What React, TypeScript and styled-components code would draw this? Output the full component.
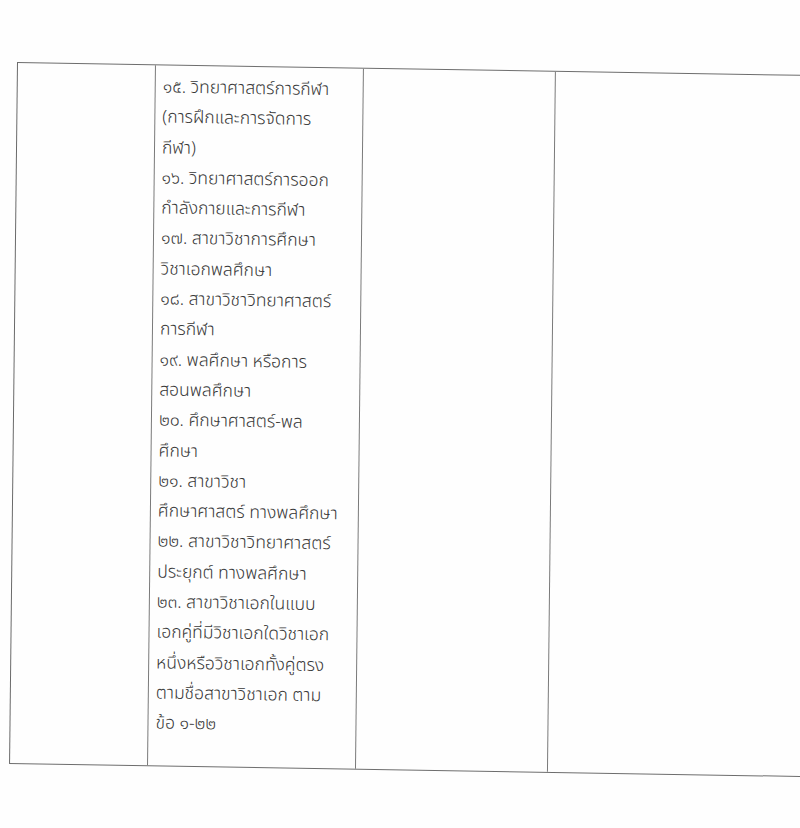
import React from "react";
import styled, { createGlobalStyle } from "styled-components";

const Global = createGlobalStyle`
  html, body {
    margin: 0;
    padding: 0;
    background: #ffffff;
  }
  body {
    font-family: "Noto Sans Thai", "Noto Sans", "DejaVu Sans", sans-serif;
  }
`;

const Page = styled.div`
  width: 800px;
  height: 828px;
  overflow: hidden;
  background: #fefefe;
  padding: 62px 0 0 17px;
  box-sizing: border-box;
`;

const Table = styled.div`
  display: grid;
  width: 840px;
  grid-template-columns: 138px 208px 192px 302px;
  height: 700px;
  border-top: 1.5px solid #6d6d6d;
  border-bottom: 1.5px solid #6d6d6d;
  transform-origin: 0 0;
  transform: skewX(-0.65deg) skewY(0.94deg);
`;

const Cell = styled.div<{ $first?: boolean }>`
  border-left: 1.2px solid ${(p) => (p.$first ? "#6a6a6a" : "#7a7a7a")};
  box-sizing: border-box;
  padding: 7px 0 0 7px;
`;

const Line = styled.div`
  white-space: nowrap;
  font-size: 17.5px;
  font-weight: 300;
  line-height: 30.3px;
  color: #383838;
`;

const lines = [
  "๑๕. วิทยาศาสตร์การกีฬา",
  "(การฝึกและการจัดการ",
  "กีฬา)",
  "๑๖. วิทยาศาสตร์การออก",
  "กำลังกายและการกีฬา",
  "๑๗. สาขาวิชาการศึกษา",
  "วิชาเอกพลศึกษา",
  "๑๘. สาขาวิชาวิทยาศาสตร์",
  "การกีฬา",
  "๑๙. พลศึกษา หรือการ",
  "สอนพลศึกษา",
  "๒๐. ศึกษาศาสตร์-พล",
  "ศึกษา",
  "๒๑. สาขาวิชา",
  "ศึกษาศาสตร์ ทางพลศึกษา",
  "๒๒. สาขาวิชาวิทยาศาสตร์",
  "ประยุกต์ ทางพลศึกษา",
  "๒๓. สาขาวิชาเอกในแบบ",
  "เอกคู่ที่มีวิชาเอกใดวิชาเอก",
  "หนึ่งหรือวิชาเอกทั้งคู่ตรง",
  "ตามชื่อสาขาวิชาเอก ตาม",
  "ข้อ ๑-๒๒",
];

export default function App() {
  return (
    <>
      <Global />
      <Page>
        <Table>
          <Cell $first />
          <Cell>
            {lines.map((l, i) => (
              <Line key={i}>{l}</Line>
            ))}
          </Cell>
          <Cell />
          <Cell />
        </Table>
      </Page>
    </>
  );
}
